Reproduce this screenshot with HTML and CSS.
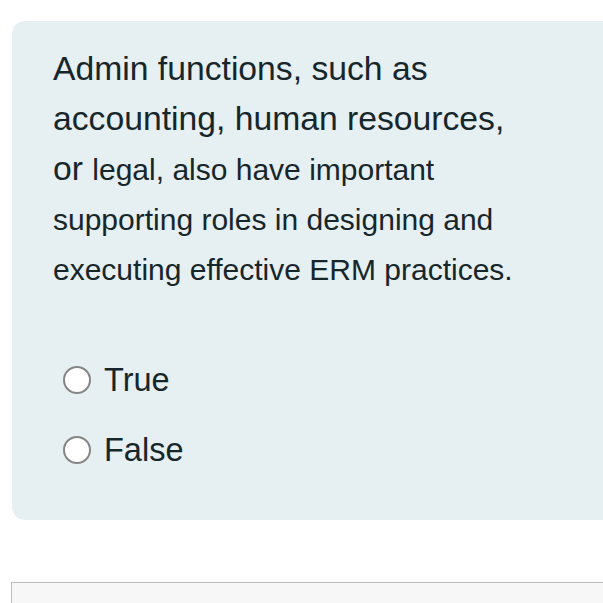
FILE: index.html
```html
<!DOCTYPE html>
<html>
<head>
<meta charset="utf-8">
<link rel="stylesheet" href="styles.css">
</head>
<body>
<div class="page">
  <div class="card">
    <p class="question">Admin functions, such as accounting, human resources, or <span class="small">legal, also have important supporting roles in designing and executing effective ERM practices.</span></p>
    <div class="options">
      <label class="option"><span class="radio"></span><span class="label">True</span></label>
      <label class="option"><span class="radio"></span><span class="label">False</span></label>
    </div>
  </div>
  <div class="next"></div>
</div>
</body>
</html>
```
FILE: styles.css
```css
html, body {
  margin: 0;
  padding: 0;
  background: #ffffff;
}
body {
  font-family: "Liberation Sans", Arial, sans-serif;
  color: #17262a;
}
.page {
  width: 603px;
  height: 603px;
  overflow: hidden;
  padding-top: 21px;
  padding-left: 12px;
  box-sizing: border-box;
}
.card {
  background: #e6eff2;
  border-radius: 13px 0 0 13px;
  width: 620px;
  height: 499px;
  box-sizing: border-box;
  padding: 22px 0 0 41px;
}
.question {
  margin: 0;
  width: 470px;
  font-size: 33.7px;
  line-height: 50px;
}
.small {
  font-size: 30px;
  line-height: 1;
}
.options {
  margin-top: 67px;
  display: flex;
  flex-direction: column;
  gap: 30px;
  padding-left: 10px;
}
.option {
  display: flex;
  align-items: center;
  height: 40px;
  font-size: 32.5px;
}
.radio {
  width: 24px;
  height: 24px;
  border: 2px solid #858585;
  border-radius: 50%;
  background: #fff;
  margin-right: 13px;
}
.next {
  margin-top: 62px;
  margin-left: -1px;
  height: 40px;
  width: 620px;
  border: 1px solid #bdbdbd;
  border-right: none;
  background: #f7f7f7;
}
```
